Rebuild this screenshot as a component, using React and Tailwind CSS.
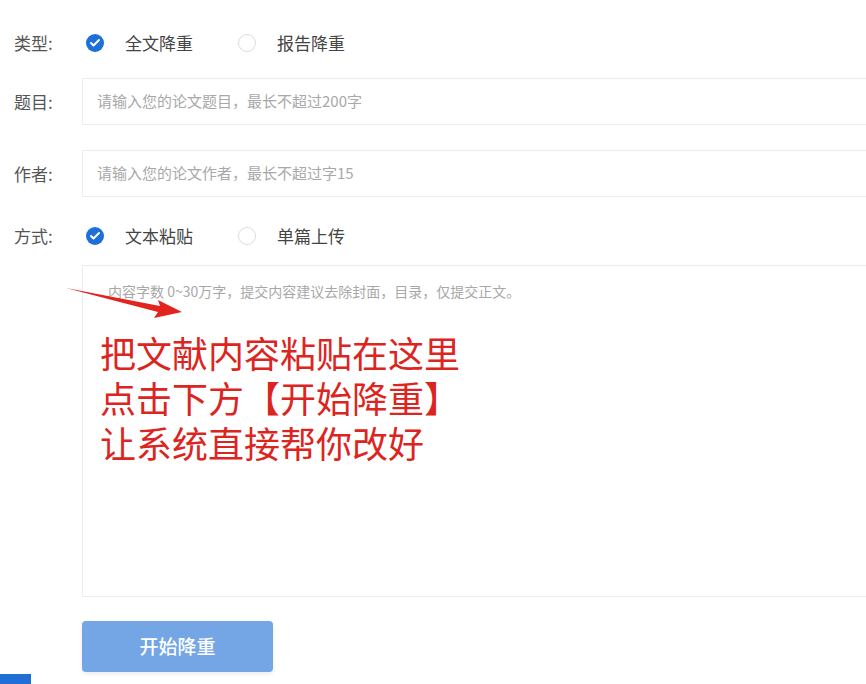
import { Check } from "lucide-react";

const font = { fontFamily: '"Microsoft YaHei", "Noto Sans CJK SC", sans-serif' };

function Radio({ checked, label }) {
  return (
    <label className="flex items-center">
      {checked ? (
        <span className="flex h-[18px] w-[18px] items-center justify-center rounded-full bg-[#1e6fd9]">
          <Check className="h-3 w-3 text-white" strokeWidth={4} />
        </span>
      ) : (
        <span className="h-[18px] w-[18px] rounded-full border border-[#dcdcdc] bg-white" />
      )}
      <span className="ml-[21px] text-[17px] text-[#444]">{label}</span>
    </label>
  );
}

function Row({ label, children, className = "" }) {
  return (
    <div className={`flex items-center ${className}`}>
      <div className="w-[82px] shrink-0 pl-[14px] text-[17px] text-[#555]">{label}</div>
      {children}
    </div>
  );
}

export default function App() {
  return (
    <div className="relative h-[684px] w-[866px] overflow-hidden bg-white" style={font}>
      <div className="pt-[30px]">
        <Row label="类型:" className="h-[26px]">
          <div className="flex items-center gap-[45px] pl-[4px]">
            <Radio checked label="全文降重" />
            <Radio label="报告降重" />
          </div>
        </Row>

        <Row label="题目:" className="mt-[22px]">
          <div className="flex h-[47px] flex-1 items-center border border-r-0 border-[#ececec] pl-[14px] text-[15px] text-[#a8a8a8]">
            请输入您的论文题目，最长不超过200字
          </div>
        </Row>

        <Row label="作者:" className="mt-[25px]">
          <div className="flex h-[47px] flex-1 items-center border border-r-0 border-[#ececec] pl-[14px] text-[15px] text-[#a8a8a8]">
            请输入您的论文作者，最长不超过字15
          </div>
        </Row>

        <Row label="方式:" className="mt-[26px] h-[26px]">
          <div className="flex items-center gap-[45px] pl-[4px]">
            <Radio checked label="文本粘贴" />
            <Radio label="单篇上传" />
          </div>
        </Row>

        <div className="ml-[82px] mt-[16px] h-[332px] border border-r-0 border-[#ececec] pl-[25px] pt-[15px]">
          <p className="text-[14px] text-[#a8a8a8]">内容字数 0~30万字，提交内容建议去除封面，目录，仅提交正文。</p>
          <div className="mt-[28px] -ml-[8px] text-[36px] leading-[45px] text-[#dc2420]">
            <p>把文献内容粘贴在这里</p>
            <p>点击下方【开始降重】</p>
            <p>让系统直接帮你改好</p>
          </div>
        </div>

        <button className="ml-[82px] mt-[24px] flex h-[51px] w-[191px] items-center justify-center rounded-[4px] bg-[#74a6e6] text-[19px] font-medium text-white shadow-[0_2px_4px_rgba(0,0,0,0.08)]">
          开始降重
        </button>
      </div>

      <svg className="absolute left-[62px] top-[282px]" width="124" height="40" viewBox="0 0 124 40">
        <path d="M4 6 L98 24 L96 18 L120 30 L92 36 L96 30 Z" fill="#e3231d" />
      </svg>

      <div className="absolute bottom-0 left-0 h-[10px] w-[31px] bg-[#1f6fd6]" />
    </div>
  );
}
